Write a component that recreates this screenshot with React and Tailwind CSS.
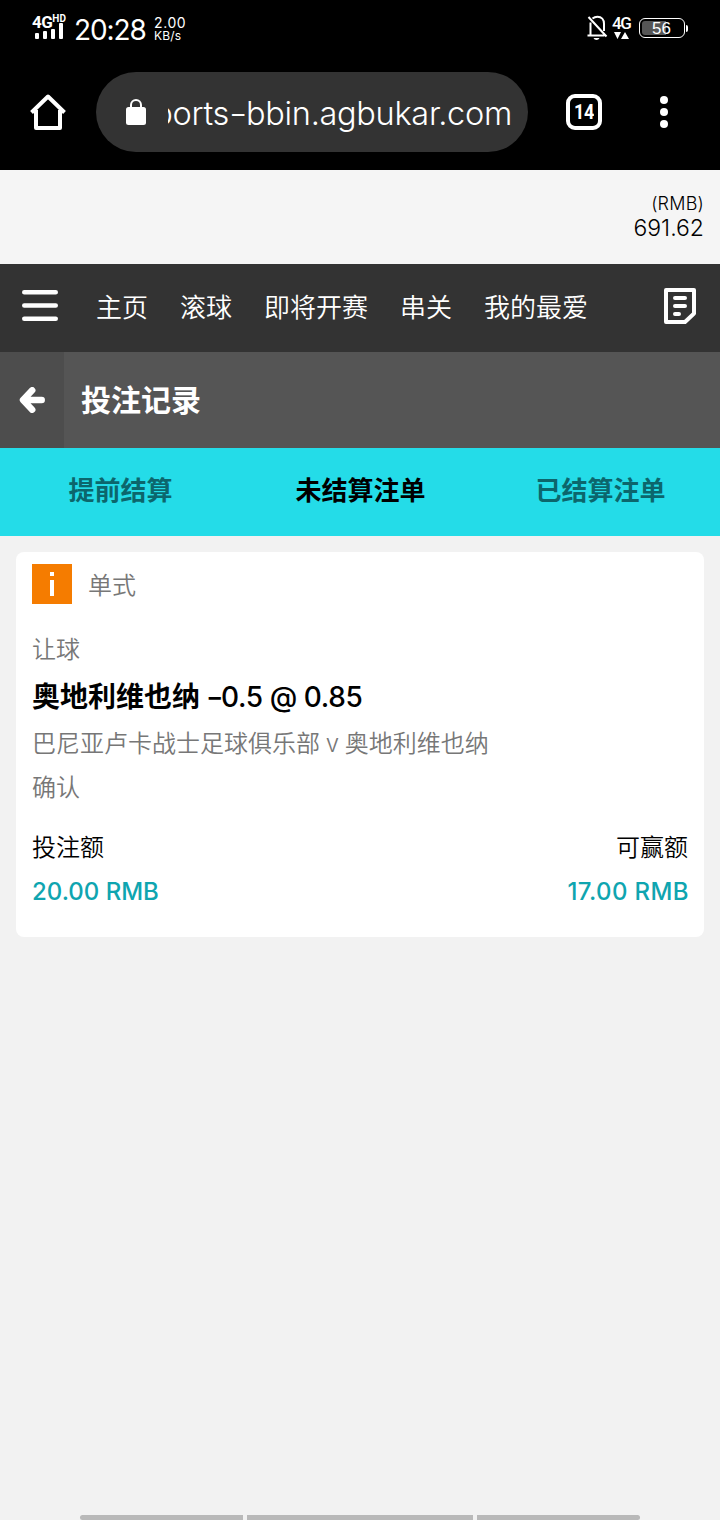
import React, { useState } from 'react';

const NAV_ITEMS = ['主页', '滚球', '即将开赛', '串关', '我的最爱'];
const TABS = ['提前结算', '未结算注单', '已结算注单'];

const BETS = [
  {
    id: 1,
    type: '单式',
    market: '让球',
    selection: '奥地利维也纳',
    handicap: '0.5 @ 0.85',
    home: '巴尼亚卢卡战士足球俱乐部',
    away: '奥地利维也纳',
    status: '确认',
    stake: '20.00 RMB',
    toWin: '17.00 RMB',
  },
];

const StatusBar = () => (
  <div className="flex h-[60px] items-start text-white">
    <div className="ml-[32px] mt-[14px] w-[36px] shrink-0">
      <div className="flex h-[14px] items-start">
        <span className="font-['Roboto'] text-[17px] font-bold leading-[16px] tracking-[-0.5px]">4G</span>
        <span className="font-['Roboto'] text-[10px] font-bold leading-[10px]">HD</span>
      </div>
      <svg width="30" height="16" viewBox="0 0 30 16" fill="currentColor" className="-mt-[5px] ml-[3px]">
        <rect x="0" y="10" width="4" height="6" rx="1" />
        <rect x="8" y="8" width="4" height="8" rx="1" />
        <rect x="16" y="6" width="4" height="10" rx="1" />
        <rect x="24" y="0" width="4" height="16" rx="1" />
      </svg>
    </div>
    <span className="ml-[6px] mt-[14px] w-[73px] shrink-0 whitespace-nowrap text-[28px] leading-[32px] tracking-[-1.1px]">
      20:28
    </span>
    <div className="ml-[7px] mt-[16px] whitespace-nowrap">
      <div className="text-[14px] leading-[13px] tracking-[0.6px]">2.00</div>
      <div className="text-[12px] leading-[13px] tracking-[0.2px]">KB/s</div>
    </div>

    <div className="ml-auto mr-[32px] flex items-start">
      <svg width="22" height="26" viewBox="0 0 22 26" fill="none" stroke="currentColor" strokeWidth="2" className="mt-[15px]">
        <path d="M5.500 3.500C7 2.200 8.800 1.700 10.500 1.700c4 0 6.500 3 6.500 7V16" />
        <path d="M3.500 7.500V20M0.500 20.500h17M1.500 2L19.500 21.500" />
        <path d="M6.500 23h6c-1 2.500-5 2.500-6 0z" fill="currentColor" stroke="none" />
      </svg>
      <div className="ml-[3px] mt-[16px] w-[20px]">
        <div className="font-['Roboto'] text-[17px] font-medium leading-[15px] tracking-[-1.5px]">4G</div>
        <svg width="16" height="8" viewBox="0 0 16 8" fill="currentColor" className="ml-[2px]">
          <path d="M0 1h7L3.500 8zM7 8h8L11 1z" />
        </svg>
      </div>
      <div className="ml-[7px] mt-[18px] flex items-center">
        <div className="flex h-[20px] w-[46px] rounded-[6px] border border-white p-[2px]">
          <div className="h-full w-[24px] rounded-l-[3px] bg-[#555555] text-[17px] leading-[15px]">
            <span className="ml-[10px] font-['Liberation_Sans']">56</span>
          </div>
        </div>
        <div className="ml-px h-[7px] w-[2px] rounded-r bg-white" />
      </div>
    </div>
  </div>
);

const BrowserBar = () => (
  <div className="flex h-[110px] items-start pt-3 text-white">
    <svg width="40" height="40" viewBox="0 0 40 40" fill="none" stroke="currentColor" strokeWidth="4" strokeLinejoin="round" className="ml-7 mt-5">
      <path d="M3.500 20.500L20 4.500L36.500 20.500" />
      <path d="M8 18v18h24V18" />
    </svg>
    <div className="ml-7 flex h-20 w-[432px] items-center rounded-full bg-[#333333] pl-[30px] pr-4">
      <svg width="20" height="26" viewBox="0 0 20 26" className="shrink-0">
        <rect x="0" y="8" width="20" height="18" rx="2.500" fill="#fff" />
        <path d="M5 9V6a5 5 0 0 1 10 0v3" fill="none" stroke="#fff" strokeWidth="2" />
      </svg>
      <div className="ml-[22px] flex flex-1 justify-end overflow-hidden pt-1">
        <span className="whitespace-nowrap text-[32.5px] font-light leading-10 tracking-[-0.3px]">
          ports<span className="inline-block w-[17px] origin-left scale-x-[1.25]">-</span>bbin.agbukar.com
        </span>
      </div>
    </div>
    <div className="ml-[38px] mt-[22px] flex h-9 w-9 items-center justify-center rounded-[9px] border-4 border-white font-['Roboto'] text-[20px] font-bold leading-none">
      <span className="scale-x-90 tracking-[-0.5px]">14</span>
    </div>
    <div className="ml-[58px] mt-6 flex flex-col gap-1">
      <span className="h-2 w-2 rounded-full bg-white" />
      <span className="h-2 w-2 rounded-full bg-white" />
      <span className="h-2 w-2 rounded-full bg-white" />
    </div>
  </div>
);

const BetCard = ({ bet }) => (
  <div className="mx-4 mt-4 h-[385px] rounded-lg bg-white px-4 pt-[11.5px] text-[24px] text-[#777777]">
    <div className="flex items-center">
      <div className="flex h-10 w-10 flex-col items-center bg-[#f57c00] pt-2">
        <span className="h-1 w-1 bg-white" />
        <span className="mt-1 h-4 w-1 bg-white" />
      </div>
      <span className="ml-4 mt-1 font-[350] leading-9">{bet.type}</span>
    </div>
    <div className="mt-[28.5px] font-[350] leading-9">{bet.market}</div>
    <div className="mt-[9px] flex text-[28px] leading-10 text-black">
      <span className="font-bold">{bet.selection}</span>
      <span className="ml-[6px] w-[15px] origin-left scale-x-[1.35] font-medium">-</span>
      <span className="whitespace-nowrap font-medium tracking-[-0.4px]">{bet.handicap}</span>
    </div>
    <div className="mt-[9px] whitespace-nowrap font-[350] leading-9 [word-spacing:-1px]">
      {bet.home} v {bet.away}
    </div>
    <div className="mt-2 font-[350] leading-9">{bet.status}</div>
    <div className="mt-6 flex justify-between font-[350] leading-9 text-black">
      <span>投注额</span>
      <span>可赢额</span>
    </div>
    <div className="mt-2 flex justify-between font-medium leading-9 text-[#0fa5b0]">
      <span>{bet.stake}</span>
      <span className="-mr-px tracking-[0.4px]">{bet.toWin}</span>
    </div>
  </div>
);

const App = () => {
  const [activeTab, setActiveTab] = useState(1);

  return (
    <div className="flex h-[1520px] w-[720px] flex-col overflow-hidden bg-[#f2f2f2] font-['Inter','Noto_Sans_CJK_SC',sans-serif]">
      <div className="h-[170px] shrink-0 bg-black">
        <StatusBar />
        <BrowserBar />
      </div>

      {/* Balance */}
      <div className="flex h-[94px] shrink-0 flex-col items-end bg-[#f5f5f5] pr-4 pt-[22px] font-light text-black">
        <span className="text-[18px] leading-6 tracking-[0.2px]">(RMB)</span>
        <span className="text-[23px] leading-6">691.62</span>
      </div>

      {/* Main nav */}
      <nav className="flex h-[88px] shrink-0 items-center bg-[#333333] text-white">
        <button className="-mt-1 ml-[22px]">
          <svg width="36" height="32" viewBox="0 0 36 32" fill="none" stroke="currentColor" strokeWidth="4.500" strokeLinecap="round">
            <path d="M2.250 2.250h31.500M2.250 15.500h31.500M2.250 28.750h31.500" />
          </svg>
        </button>
        <div className="ml-[38px] flex gap-8 text-[26px] font-[350] leading-9">
          {NAV_ITEMS.map((item) => (
            <span key={item}>{item}</span>
          ))}
        </div>
        <svg width="32" height="36" viewBox="0 0 32 36" fill="none" stroke="currentColor" strokeWidth="4" className="ml-auto mr-6 -mt-1">
          <path d="M2 2h28v23.500L21 34H2z" strokeLinejoin="round" />
          <path d="M11 10h10M11 18h10M11 26h4" strokeLinecap="round" />
        </svg>
      </nav>

      {/* Page title */}
      <div className="flex h-24 shrink-0 items-center bg-[#555555] text-white">
        <button className="flex h-full w-16 items-center justify-center bg-[#4d4d4d]">
          <svg width="26" height="26" viewBox="0 0 26 26" fill="none" stroke="currentColor" strokeWidth="6.500" strokeLinecap="round" strokeLinejoin="round">
            <path d="M13.200 3.300L4 13L13.200 22.700M5 13h17.700" />
          </svg>
        </button>
        <h1 className="ml-[17px] text-[30px] font-bold leading-10">投注记录</h1>
      </div>

      {/* Tabs */}
      <div className="grid h-[88px] shrink-0 grid-cols-3 bg-[#24dce8]">
        {TABS.map((tab, index) => (
          <button
            key={tab}
            onClick={() => setActiveTab(index)}
            className={`pb-[3px] pl-px text-[26px] font-bold ${activeTab === index ? 'text-black' : 'text-[#0c666c]'}`}
          >
            {tab}
          </button>
        ))}
      </div>

      {BETS.map((bet) => (
        <BetCard key={bet.id} bet={bet} />
      ))}

      {/* Gesture bar */}
      <div className="mt-auto flex shrink-0 justify-center gap-1">
        <span className="h-[5px] w-[163px] rounded-l-full bg-[#b9b9b9]" />
        <span className="h-[5px] w-[226px] bg-[#b9b9b9]" />
        <span className="h-[5px] w-[163px] rounded-r-full bg-[#b9b9b9]" />
      </div>
    </div>
  );
};

export default App;
